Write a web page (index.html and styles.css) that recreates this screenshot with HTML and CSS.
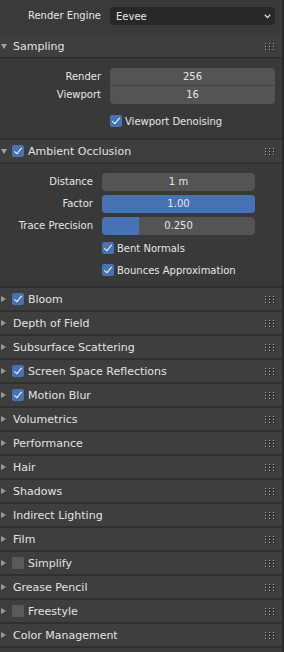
FILE: index.html
```html
<!DOCTYPE html>
<html lang="en">
<head>
    <meta charset="UTF-8">
    <title>Render Properties</title>
    <link rel="stylesheet" href="styles.css">
</head>
<body>
    <div class="props">
        <!-- Render engine selector -->
        <div class="engine-row">
            <span class="label">Render Engine</span>
            <div class="select">
                <span>Eevee</span>
                <svg width="7" height="5" viewBox="0 0 7 5"><path d="M0.8 0.8 L3.5 3.6 L6.2 0.8" fill="none" stroke="#e0e0e0" stroke-width="1.3"/></svg>
            </div>
        </div>

        <!-- Sampling -->
        <section class="panel">
            <div class="panel-header">
                <span class="arrow down"></span>
                <span class="title">Sampling</span>
                <span class="grip"></span>
            </div>
            <div class="panel-body wide">
                <span class="label">Render</span>
                <div class="field joined-top">256</div>
                <span class="label">Viewport</span>
                <div class="field joined-bottom">16</div>
                <span></span>
                <div class="check check-first"><span class="box on"></span>Viewport Denoising</div>
            </div>
        </section>

        <!-- Ambient Occlusion -->
        <section class="panel">
            <div class="panel-header">
                <span class="arrow down"></span>
                <span class="box on"></span>
                <span class="title">Ambient Occlusion</span>
                <span class="grip"></span>
            </div>
            <div class="panel-body narrow">
                <span class="label">Distance</span>
                <div class="field">1 m</div>
                <span class="label">Factor</span>
                <div class="field slider"><span class="fill" style="width: 100%"></span><span class="value">1.00</span></div>
                <span class="label">Trace Precision</span>
                <div class="field slider"><span class="fill" style="width: 24%"></span><span class="value">0.250</span></div>
                <span></span>
                <div class="check"><span class="box on"></span>Bent Normals</div>
                <span></span>
                <div class="check"><span class="box on"></span>Bounces Approximation</div>
            </div>
        </section>

        <!-- Closed panels -->
        <section class="panel"><div class="panel-header closed"><span class="arrow right"></span><span class="box on"></span><span class="title">Bloom</span><span class="grip"></span></div></section>
        <section class="panel"><div class="panel-header closed"><span class="arrow right"></span><span class="title">Depth of Field</span><span class="grip"></span></div></section>
        <section class="panel"><div class="panel-header closed"><span class="arrow right"></span><span class="title">Subsurface Scattering</span><span class="grip"></span></div></section>
        <section class="panel"><div class="panel-header closed"><span class="arrow right"></span><span class="box on"></span><span class="title">Screen Space Reflections</span><span class="grip"></span></div></section>
        <section class="panel"><div class="panel-header closed"><span class="arrow right"></span><span class="box on"></span><span class="title">Motion Blur</span><span class="grip"></span></div></section>
        <section class="panel"><div class="panel-header closed"><span class="arrow right"></span><span class="title">Volumetrics</span><span class="grip"></span></div></section>
        <section class="panel"><div class="panel-header closed"><span class="arrow right"></span><span class="title">Performance</span><span class="grip"></span></div></section>
        <section class="panel"><div class="panel-header closed"><span class="arrow right"></span><span class="title">Hair</span><span class="grip"></span></div></section>
        <section class="panel"><div class="panel-header closed"><span class="arrow right"></span><span class="title">Shadows</span><span class="grip"></span></div></section>
        <section class="panel"><div class="panel-header closed"><span class="arrow right"></span><span class="title">Indirect Lighting</span><span class="grip"></span></div></section>
        <section class="panel"><div class="panel-header closed"><span class="arrow right"></span><span class="title">Film</span><span class="grip"></span></div></section>
        <section class="panel"><div class="panel-header closed"><span class="arrow right"></span><span class="box"></span><span class="title">Simplify</span><span class="grip"></span></div></section>
        <section class="panel"><div class="panel-header closed"><span class="arrow right"></span><span class="title">Grease Pencil</span><span class="grip"></span></div></section>
        <section class="panel"><div class="panel-header closed"><span class="arrow right"></span><span class="box"></span><span class="title">Freestyle</span><span class="grip"></span></div></section>
        <section class="panel"><div class="panel-header closed"><span class="arrow right"></span><span class="title">Color Management</span><span class="grip"></span></div></section>
    </div>
</body>
</html>
```

FILE: styles.css
```css
/* General */
body {
    margin: 0;
    background: #2b2b2b;
    font-family: 'DejaVu Sans', sans-serif;
    color: #e6e6e6;
}

.props {
    width: 282px;
    min-height: 100vh;
    background: #3a3a3a;
}

.label {
    font-size: 10px;
    text-align: right;
    color: #e6e6e6;
    line-height: 18px;
    white-space: nowrap;
}

/* Render Engine row */
.engine-row {
    display: grid;
    grid-template-columns: 101px 1fr;
    column-gap: 9px;
    padding: 7px 7px 0 0;
    height: 28px;
}

.select {
    height: 18px;
    background: #282828;
    border-radius: 4px;
    display: flex;
    align-items: center;
    justify-content: space-between;
    padding: 0 4px 0 6px;
    font-size: 10px;
}

/* Panels */
.panel {
    border-bottom: 2px solid #2f2f2f;
}

.panel-header {
    display: flex;
    align-items: center;
    height: 22px;
    padding-left: 1px;
    background: #3e3e3e;
    border-bottom: 2px solid #313131;
}

.panel-header.closed {
    border-bottom: none;
}

.panel-header .title {
    margin-left: 6px;
    font-size: 11px;
    color: #e2e2e2;
}

.panel-header .box {
    margin-left: 5px;
}

.panel-header .box + .title {
    margin-left: 4px;
}

.arrow {
    width: 0;
    height: 0;
}

.arrow.down {
    border-left: 3px solid transparent;
    border-right: 3px solid transparent;
    border-top: 5px solid #a2a2a2;
}

.arrow.right {
    border-top: 3px solid transparent;
    border-bottom: 3px solid transparent;
    border-left: 5px solid #9c9c9c;
    margin-right: 1px;
}

/* drag handle dots */
.grip {
    margin-left: auto;
    margin-right: 7px;
    width: 10px;
    height: 8px;
    position: relative;
}

.grip::before {
    content: "";
    position: absolute;
    left: 0;
    top: 1px;
    width: 1px;
    height: 1px;
    background: #a8a8a8;
    box-shadow:
        4px 0 #a8a8a8, 8px 0 #a8a8a8,
        0 3px #a8a8a8, 4px 3px #a8a8a8, 8px 3px #a8a8a8,
        0 6px #a8a8a8, 4px 6px #a8a8a8, 8px 6px #a8a8a8,
        1px 1px #1e1e1e, 5px 1px #1e1e1e, 9px 1px #1e1e1e,
        1px 4px #1e1e1e, 5px 4px #1e1e1e, 9px 4px #1e1e1e,
        1px 7px #1e1e1e, 5px 7px #1e1e1e, 9px 7px #1e1e1e;
}

.panel-body {
    display: grid;
    background: #393939;
    align-items: center;
}

.panel-body.wide {
    grid-template-columns: 101px 1fr;
    column-gap: 9px;
    padding: 9px 7px 8px 0;
}

.panel-body.narrow {
    grid-template-columns: 93px 1fr;
    column-gap: 9px;
    row-gap: 4px;
    padding: 9px 27px 7px 0;
}

/* Number fields */
.field {
    height: 18px;
    line-height: 18px;
    background: #545454;
    border-radius: 4px;
    text-align: center;
    font-size: 10px;
    color: #e6e6e6;
    position: relative;
    overflow: hidden;
}

.field.joined-top {
    border-radius: 4px 4px 0 0;
    border-bottom: 1px solid #444;
    height: 17px;
    line-height: 17px;
}

.field.joined-bottom {
    border-radius: 0 0 4px 4px;
}

.slider .fill {
    position: absolute;
    left: 0;
    top: 0;
    bottom: 0;
    background: #4772b3;
}

.slider .value {
    position: relative;
}

/* Checkboxes */
.check {
    display: flex;
    align-items: center;
    height: 18px;
    font-size: 10px;
    color: #e6e6e6;
}

.check-first {
    margin-top: 8px;
}

.check .box {
    margin-right: 3px;
}

.box {
    width: 12px;
    height: 12px;
    border-radius: 2px;
    background: #5b5b5b;
    flex-shrink: 0;
    position: relative;
}

.box.on {
    background: #4772b3;
}

.box.on::after {
    content: "";
    position: absolute;
    left: 4px;
    top: 1px;
    width: 3px;
    height: 7px;
    border-right: 1.6px solid #fff;
    border-bottom: 1.6px solid #fff;
    transform: rotate(40deg);
}
```
